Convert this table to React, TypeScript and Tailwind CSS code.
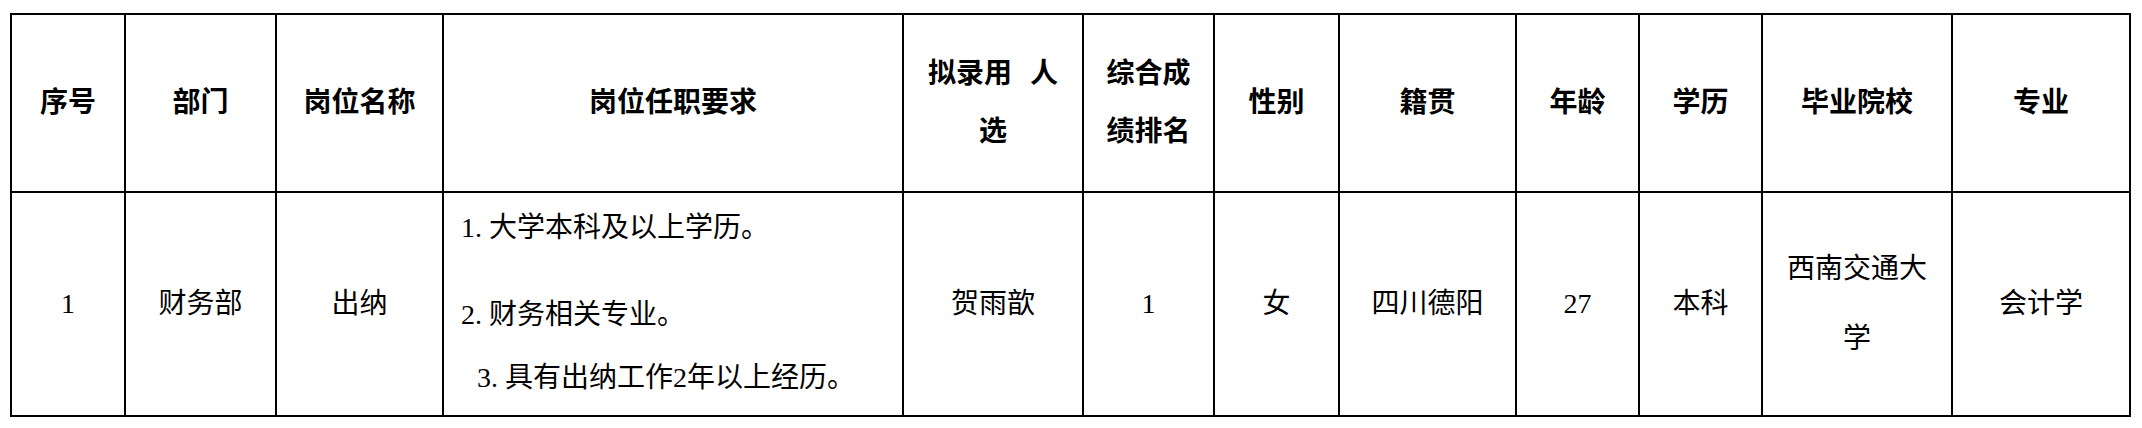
// 拟录用人员公示表：单行表头 + 一条记录，宋体风格用 Noto Sans CJK 代替
const colWidths = [
  "w-[114px]",
  "w-[151px]",
  "w-[167px]",
  "w-[460px]",
  "w-[180px]",
  "w-[131px]",
  "w-[125px]",
  "w-[177px]",
  "w-[123px]",
  "w-[123px]",
  "w-[190px]",
  "w-[178px]",
];

const th = "border-2 border-black p-0 text-center align-middle font-semibold";
const td = "border-2 border-black p-0 text-center align-middle";

// 半角序号（宋体里 "1." 占两个半角宽）
function Num({ n }: { n: string }) {
  return <span className="inline-block w-[28px]">{n}.</span>;
}

export default function App() {
  return (
    <div className="h-[428px] w-[2142px] overflow-hidden bg-white pl-[10px] pt-[13px] font-['Liberation_Serif','Noto_Sans_CJK_SC',serif] text-[28px] leading-[40px] text-black">
      <table className="table-fixed border-collapse">
        <colgroup>
          {colWidths.map((w, i) => (
            <col key={i} className={w} />
          ))}
        </colgroup>
        <thead>
          <tr className="h-[178px]">
            <th className={th}>序号</th>
            <th className={th}>部门</th>
            <th className={th}>岗位名称</th>
            <th className={th}>岗位任职要求</th>
            <th className={th + " leading-[58px]"}>
              拟录用<span className="inline-block w-[18px]" />人
              <br />选
            </th>
            <th className={th + " leading-[58px]"}>
              综合成
              <br />
              绩排名
            </th>
            <th className={th}>性别</th>
            <th className={th}>籍贯</th>
            <th className={th}>年龄</th>
            <th className={th}>学历</th>
            <th className={th}>毕业院校</th>
            <th className={th}>专业</th>
          </tr>
        </thead>
        <tbody>
          <tr className="h-[224px]">
            <td className={td}>1</td>
            <td className={td}>财务部</td>
            <td className={td}>出纳</td>
            <td className="border-2 border-black px-[17px] pt-[15px] text-left align-top">
              <div>
                <Num n="1" />
                大学本科及以上学历。
              </div>
              <div className="mt-[47px]">
                <Num n="2" />
                财务相关专业。
              </div>
              <div className="mt-[23px] pl-[16px]">
                <Num n="3" />
                具有出纳工作2年以上经历。
              </div>
            </td>
            <td className={td}>贺雨歆</td>
            <td className={td}>1</td>
            <td className={td}>女</td>
            <td className={td}>四川德阳</td>
            <td className={td}>27</td>
            <td className={td}>本科</td>
            <td className={td + " leading-[70px]"}>
              西南交通大
              <br />学
            </td>
            <td className={td}>会计学</td>
          </tr>
        </tbody>
      </table>
    </div>
  );
}
